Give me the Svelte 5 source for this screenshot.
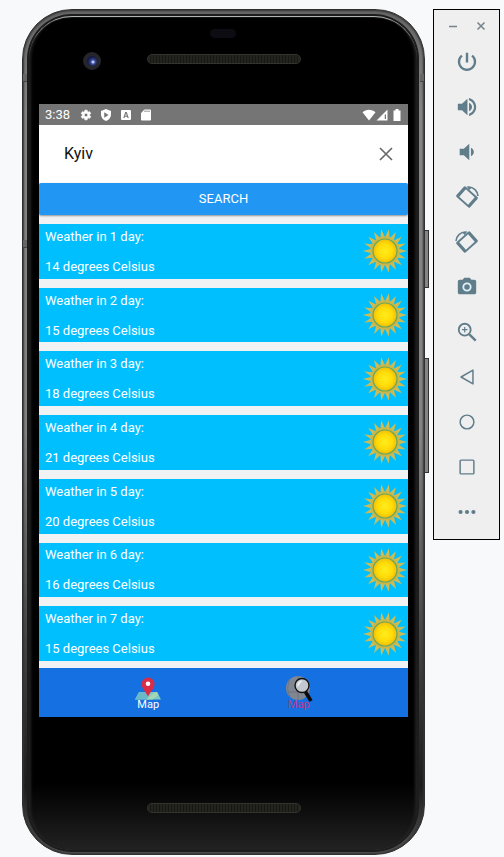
<script>
  const forecast = [14, 15, 18, 21, 20, 16, 15].map((degrees, i) => ({ day: i + 1, degrees }));
  const rays = Array.from({ length: 18 }, (_, i) => i * 20 + 10);
  let city = $state('Kyiv');

  const tools = [
    'Power', 'Volume up', 'Volume down', 'Rotate left', 'Rotate right', 'Take screenshot',
    'Zoom', 'Back', 'Home', 'Overview', 'More'
  ];
</script>

{#snippet sun()}
  <svg class="sun" viewBox="-22 -22 44 44" aria-hidden="true">
    {#each rays as angle}
      <path d="M-2.200 -14 L0 -22 L2.200 -14 Z" fill="#cdbb55" transform="rotate({angle})" />
    {/each}
    <circle r="14.600" fill="#cdb645" />
    <circle r="12" fill="url(#sunFace)" stroke="#64a860" stroke-width="1.200" />
  </svg>
{/snippet}

{#snippet toolIcon(name)}
  <svg viewBox="0 0 24 24" aria-hidden="true">
    {#if name === 'Power'}
      <path d="M13.300 2h-2.600v10.500h2.600V2zm5.100 2.200l-1.700 1.700C18.300 7.200 19.400 9.300 19.400 11.700c0 4.100-3.300 7.400-7.400 7.400s-7.400-3.300-7.400-7.400c0-2.400 1.100-4.500 2.700-5.800L5.600 4.200C3.400 6 2 8.700 2 11.700c0 5.500 4.500 10 10 10s10-4.500 10-10c0-3-1.400-5.700-3.600-7.500z" />
    {:else if name === 'Volume up'}
      <path d="M2 8.500v7h4.500l6 5.500V3L6.500 8.500H2zm15.500 3.500c0-1.900-1.300-3.700-3.300-4.600v9.200c2-.9 3.300-2.700 3.300-4.600zM14.200 2.200v2.500c3.100.9 5.400 3.800 5.400 7.300s-2.300 6.400-5.400 7.300v2.500c4.500-1 7.800-5 7.800-9.800s-3.300-8.800-7.800-9.800z" />
    {:else if name === 'Volume down'}
      <path d="M19.500 12c0-1.900-1.300-3.700-3.200-4.600v9.200c1.900-.9 3.200-2.700 3.200-4.600zM4 8.500v7h4.500l6 5.500V3L8.500 8.500H4z" />
    {:else if name === 'Rotate left' || name === 'Rotate right'}
      <g transform={name === 'Rotate right' ? 'matrix(-1 0 0 1 24 0)' : undefined}>
        <g transform="rotate(42 12 12)">
          <path fill-rule="evenodd" d="M3.500 4.500h17a1.500 1.500 0 0 1 1.500 1.500v12a1.500 1.500 0 0 1-1.500 1.500h-17a1.500 1.500 0 0 1-1.500-1.500v-12a1.500 1.500 0 0 1 1.500-1.500zM5.500 6.600v10.800h13V6.600z" />
        </g>
        <path d="M13.500 1a10.500 10.500 0 0 1 10.500 10" fill="none" stroke="currentColor" stroke-width="1.700" />
        <path d="M11.500 .2l6 1.200-3 3z" />
      </g>
    {:else if name === 'Take screenshot'}
      <path d="M9 2L7.170 4H4c-1.100 0-2 .9-2 2v12c0 1.100.9 2 2 2h16c1.100 0 2-.9 2-2V6c0-1.100-.9-2-2-2h-3.170L15 2z" />
      <circle cx="12" cy="12" r="4" fill="none" stroke="#dff1f8" stroke-width="2" />
    {:else if name === 'Zoom'}
      <g fill="none" stroke="currentColor">
        <circle cx="9.500" cy="9.500" r="6.500" stroke-width="2" />
        <path d="M14.500 14.500l7 7" stroke-width="2.600" />
        <path d="M9.500 6.500v6M6.500 9.500h6" stroke-width="1.300" />
      </g>
    {:else if name === 'Back'}
      <path d="M18.500 4.500v15L5.500 12z" fill="none" stroke="currentColor" stroke-width="1.600" stroke-linejoin="round" />
    {:else if name === 'Home'}
      <circle cx="12" cy="12" r="7.500" fill="none" stroke="currentColor" stroke-width="1.600" />
    {:else if name === 'Overview'}
      <rect x="4.500" y="4.500" width="15" height="15" rx="1" fill="none" stroke="currentColor" stroke-width="1.600" />
    {:else}
      <circle cx="5" cy="12" r="2.300" /><circle cx="12" cy="12" r="2.300" /><circle cx="19" cy="12" r="2.300" />
    {/if}
  </svg>
{/snippet}

<svg class="defs" width="0" height="0" aria-hidden="true">
  <defs>
    <radialGradient id="sunFace">
      <stop offset="0" stop-color="#ffec1c" />
      <stop offset="0.6" stop-color="#ffdc08" />
      <stop offset="1" stop-color="#efbd0c" />
    </radialGradient>
  </defs>
</svg>

<div class="desk">
  <div class="phone">
    <span class="key lock"></span>
    <span class="key volume"></span>
    <span class="band left"></span>
    <span class="band right"></span>
    <span class="band lower"></span>
    <div class="glass">
      <div class="forehead">
        <span class="lens"></span>
        <span class="sensor"></span>
        <span class="speaker"></span>
      </div>

      <main class="screen">
        <header class="status">
          <span class="clock">3:38</span>
          <svg viewBox="0 0 24 24" aria-hidden="true"><path d="M19.140 12.940c.04-.3.06-.61.06-.94 0-.32-.02-.64-.07-.94l2.030-1.580c.18-.14.23-.41.12-.61l-1.920-3.320c-.12-.22-.37-.29-.59-.22l-2.390.96c-.5-.38-1.030-.7-1.620-.94l-.36-2.540c-.04-.24-.24-.41-.48-.41h-3.840c-.24 0-.43.17-.47.41l-.36 2.540c-.59.24-1.130.57-1.620.94l-2.390-.96c-.22-.08-.47 0-.59.22L2.740 8.870c-.12.21-.08.47.12.61l2.030 1.580c-.05.3-.09.63-.09.94s.02.64.07.94l-2.030 1.580c-.18.14-.23.41-.12.61l1.920 3.320c.12.22.37.29.59.22l2.390-.96c.5.38 1.030.7 1.620.94l.36 2.540c.05.24.24.41.48.41h3.840c.24 0 .44-.17.47-.41l.36-2.540c.59-.24 1.130-.56 1.620-.94l2.390.96c.22.08.47 0 .59-.22l1.920-3.320c.12-.22.07-.47-.12-.61l-2.010-1.580zM12 15.600c-1.980 0-3.600-1.620-3.600-3.600s1.620-3.600 3.600-3.600 3.600 1.620 3.600 3.600-1.620 3.600-3.600 3.600z" stroke="#fff" stroke-width="1.600" /></svg>
          <svg viewBox="0 0 24 24" aria-hidden="true"><path fill-rule="evenodd" d="M12 0L2 4v7c0 6 4 10.500 10 13 6-2.500 10-7 10-13V4zM8.500 6.500L17 12l-8.500 5.500z" /></svg>
          <svg viewBox="0 0 24 24" aria-hidden="true"><path fill-rule="evenodd" d="M4 2h16a2 2 0 0 1 2 2v16a2 2 0 0 1-2 2H4a2 2 0 0 1-2-2V4a2 2 0 0 1 2-2zM10.500 6L6.500 18h2.500l.8-2.500h4.400l.8 2.500h2.500L13.500 6zM12 8.500l1.500 5h-3z" /></svg>
          <svg viewBox="0 0 24 24" aria-hidden="true"><path fill-rule="evenodd" d="M9 1h11a2 2 0 0 1 2 2v18a2 2 0 0 1-2 2H4a2 2 0 0 1-2-2V8zM9 3v3h2V3zM13 3v3h2V3zM17 3v3h2V3z" /></svg>
          <span class="signals">
            <svg class="wide" viewBox="0 0 28 24" aria-hidden="true"><path d="M14 23L1 6.500C8-.5 20-.5 27 6.500z" /></svg>
            <svg viewBox="0 0 24 24" aria-hidden="true"><path fill-rule="evenodd" d="M1 23L23 1v22zM17.500 11v9h2.500v-9z" /></svg>
            <svg viewBox="0 0 24 24" class="battery" aria-hidden="true"><path d="M9 0h6v3h4v21H5V3h4z" /></svg>
          </span>
        </header>

        <form class="search" onsubmit={(e) => e.preventDefault()}>
          <div class="field">
            <input aria-label="City" bind:value={city} />
            <button type="button" class="clear" aria-label="Clear" onclick={() => (city = '')}>
              <svg viewBox="0 0 14 14" aria-hidden="true"><path d="M1 1l12 12M13 1L1 13" stroke="#666" stroke-width="1.600" /></svg>
            </button>
          </div>
          <button type="submit" class="submit">SEARCH</button>
        </form>

        <ul class="days">
          {#each forecast as { day, degrees }}
            <li>
              <div class="text">
                <span>Weather in {day} day:</span>
                <span>{degrees} degrees Celsius</span>
              </div>
              {@render sun()}
            </li>
          {/each}
        </ul>

        <nav class="tabs">
          <a href="#map">
            <svg viewBox="0 0 28 28" aria-hidden="true">
              <path d="M5 17h18l4 7.500H1z" fill="#7cc9c6" />
              <path d="M5 17h7l3 7.500H1z" fill="#69b9c8" />
              <path d="M12 24.500l9-7.500h2l1.500 3-6 4.500z" fill="#a4d7b5" />
              <path d="M14 21.500C11 16 7.500 13 7.500 9a6.500 6.500 0 0 1 13 0c0 4-3.500 7-6.500 12.500z" fill="#d92c49" />
              <circle cx="14" cy="8.800" r="2.300" fill="#fff" />
            </svg>
            <span>Map</span>
          </a>
          <a href="#search" class="active">
            <svg viewBox="0 0 28 28" aria-hidden="true">
              <circle cx="13" cy="13" r="12" fill="#808792" />
              <path d="M1 17h18M13 1v24M5 4c-3 6-3 12 0 18" stroke="#6b6f7c" fill="none" stroke-width=".8" />
              <path d="M20 16l6 10" stroke="#0a0a0a" stroke-width="3.600" />
              <circle cx="17" cy="10.500" r="7" fill="#c3c7cf" stroke="#111" stroke-width="1.400" />
              <path d="M12.500 12a5 5 0 0 1 5-6.500z" fill="#eceef2" />
            </svg>
            <span>Map</span>
          </a>
        </nav>
      </main>

      <div class="chin"><span class="speaker"></span></div>
    </div>
  </div>

  <aside class="toolbar" aria-label="Emulator controls">
    <div class="window">
      <button aria-label="Minimize"><svg viewBox="0 0 10 10" aria-hidden="true"><path d="M1 5.500h8" /></svg></button>
      <button aria-label="Close"><svg viewBox="0 0 10 10" aria-hidden="true"><path d="M1.500 1.500l7 7M8.500 1.500l-7 7" /></svg></button>
    </div>
    {#each tools as name}
      <button class="tool" aria-label={name}>{@render toolIcon(name)}</button>
    {/each}
  </aside>
</div>

<style>
  :global(body) {
    margin: 0;
    background: #f8f9fb;
  }
  .defs {
    position: absolute;
  }
  .desk, .desk * {
    box-sizing: border-box;
  }
  .desk {
    display: flex;
    align-items: flex-start;
    gap: 8px;
    padding: 9px 4px 3px 22px;
    font-family: Roboto, "Liberation Sans", sans-serif;
  }
  button {
    border: 0;
    padding: 0;
    background: none;
    font: inherit;
    cursor: pointer;
  }

  .phone {
    position: relative;
    flex: 1;
    min-width: 0;
    padding: 6px 7px 4px 6px;
    border: 1px solid #303030;
    border-radius: 50px;
    background: linear-gradient(#666 0, #858585 12%, #858585 50%, #444 75%, #1c1c1c 92%, #555 100%);
    box-shadow: inset 0 0 2px 1px #333;
  }
  .glass {
    padding: 2px 9px 0 10px;
    border-radius: 43px;
    background: linear-gradient(#000 92%, #222 100%);
    box-shadow: 0 0 0 2px #1c1c1c, inset 0 2px 1px -1px #c4c8c8, inset 4px 0 3px -2px #222, inset -4px 0 3px -2px #222;
  }
  .key {
    position: absolute;
    right: -5px;
    width: 5px;
    border: 1px solid #333;
    background: #858585;
  }
  .lock {
    top: 220px;
    height: 58px;
  }
  .volume {
    top: 348px;
    height: 115px;
  }
  .band {
    position: absolute;
    width: 4px;
    height: 8px;
    border: solid #444;
    border-width: 0 0 1px;
    background: #666;
  }
  .left {
    top: 64px;
    left: 0;
  }
  .right {
    top: 64px;
    right: 0;
  }
  .lower {
    top: 230px;
    left: 0;
  }
  .forehead {
    position: relative;
    height: 86px;
    padding-top: 36px;
  }
  .speaker {
    display: block;
    width: 154px;
    height: 10px;
    margin: 0 auto;
    border: 1px solid #34342f;
    border-radius: 5px;
    background: repeating-linear-gradient(90deg, #24241f 0 2px, #171714 2px 3px);
  }
  .lens {
    position: absolute;
    top: 34px;
    left: 44px;
    width: 18px;
    height: 18px;
    border: 4px solid #25262b;
    border-radius: 50%;
    background: radial-gradient(circle at 60% 60%, #b9c8ff 0 1px, #3e4e9c 2px, #141b46 5px);
  }
  .sensor {
    position: absolute;
    top: 11px;
    left: 171px;
    width: 26px;
    height: 9px;
    border-radius: 5px;
    background: #0c0c12;
  }

  .screen {
    display: flex;
    flex-direction: column;
    min-height: 613px;
    background: #f0f2f4;
  }
  .status {
    display: flex;
    align-items: center;
    gap: 8px;
    height: 21px;
    padding: 0 5px 0 6px;
    background: #757575;
    color: #fff;
    font-size: 13px;
    line-height: 21px;
  }
  .status svg {
    width: 12px;
    height: 12px;
    fill: #fff;
  }
  .clock {
    min-width: 27px;
  }
  .signals {
    display: flex;
    margin-left: auto;
  }
  .status .wide {
    width: 14px;
  }
  .status .battery {
    margin-left: 3px;
  }
  .field {
    display: flex;
    align-items: center;
    height: 58px;
    padding: 0 15px 0 25px;
    background: #fff;
  }
  input {
    flex: 1;
    min-width: 0;
    border: 0;
    padding: 0;
    outline: 0;
    background: none;
    color: #111;
    font: 16px/24px Roboto, "Liberation Sans", sans-serif;
  }
  .clear {
    display: flex;
  }
  .clear svg {
    width: 14px;
    height: 14px;
  }
  .submit {
    display: block;
    width: 100%;
    height: 32px;
    border-radius: 2px;
    background: #2196f3;
    box-shadow: 0 1px 2px #0006;
    color: #fff;
    font-size: 13px;
    line-height: 32px;
  }
  .days {
    flex: 1;
    display: grid;
    grid-auto-rows: 1fr;
    gap: 9px;
    margin: 0;
    padding: 9px 0 7px;
    list-style: none;
  }
  li {
    display: flex;
    align-items: center;
    justify-content: space-between;
    padding: 0 1px 0 6px;
    background: #00bfff;
    color: #fff;
    font-size: 13px;
    line-height: 15px;
  }
  .text {
    display: flex;
    flex-direction: column;
    gap: 15px;
  }
  .sun {
    width: 44px;
    height: 44px;
  }
  .tabs {
    display: flex;
    height: 49px;
    padding: 0 34px;
    background: #1570e2;
  }
  .tabs a {
    flex: 1;
    display: flex;
    flex-direction: column;
    align-items: center;
    justify-content: center;
    color: #fff;
    font-size: 11px;
    line-height: 12px;
    text-decoration: none;
  }
  .tabs svg {
    width: 28px;
    height: 28px;
    margin-bottom: -4px;
  }
  .tabs .active span {
    color: #b83a86;
  }
  .tabs .active svg {
    z-index: 1;
  }
  .chin {
    height: 133px;
    padding-top: 86px;
  }

  .toolbar {
    flex: none;
    width: 67px;
    padding-bottom: 5px;
    border: 1px solid #000;
    background: #efefef;
    color: #607d8b;
  }
  .window {
    display: flex;
    justify-content: center;
    gap: 18px;
    height: 29px;
    padding-top: 3px;
  }
  .window svg {
    display: block;
    width: 10px;
    height: 10px;
    stroke: #75838a;
    stroke-width: 1.500;
  }
  .tool {
    display: flex;
    align-items: center;
    justify-content: center;
    width: 100%;
    height: 45px;
    color: inherit;
  }
  .tool svg {
    width: 22px;
    height: 22px;
    fill: currentColor;
    overflow: visible;
  }
</style>
